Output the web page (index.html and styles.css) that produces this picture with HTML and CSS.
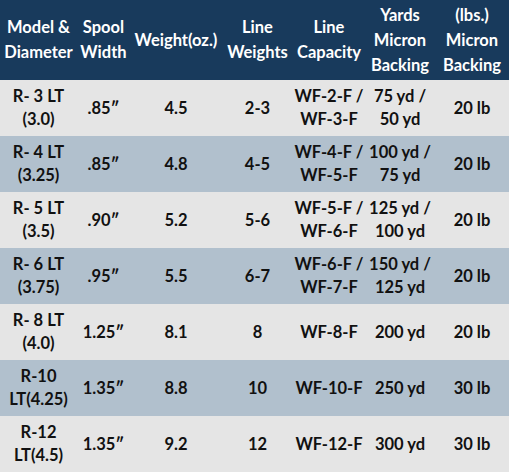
FILE: index.html
```html
<!DOCTYPE html>
<html>
<head>
<meta charset="utf-8">
<link rel="stylesheet" href="styles.css">
</head>
<body>
<table class="specs">
  <colgroup>
    <col class="c1"><col class="c2"><col class="c3"><col class="c4"><col class="c5"><col class="c6"><col class="c7">
  </colgroup>
  <thead>
    <tr>
      <th>Model &amp;<br>Diameter</th>
      <th>Spool<br>Width</th>
      <th>Weight(oz.)</th>
      <th>Line<br>Weights</th>
      <th>Line<br>Capacity</th>
      <th>Yards<br>Micron<br>Backing</th>
      <th>(lbs.)<br>Micron<br>Backing</th>
    </tr>
  </thead>
  <tbody>
    <tr><td>R- 3 LT<br>(3.0)</td><td>.85″</td><td>4.5</td><td>2-3</td><td>WF-2-F /<br>WF-3-F</td><td>75 yd /<br>50 yd</td><td>20 lb</td></tr>
    <tr><td>R- 4 LT<br>(3.25)</td><td>.85″</td><td>4.8</td><td>4-5</td><td>WF-4-F /<br>WF-5-F</td><td>100 yd /<br>75 yd</td><td>20 lb</td></tr>
    <tr><td>R- 5 LT<br>(3.5)</td><td>.90″</td><td>5.2</td><td>5-6</td><td>WF-5-F /<br>WF-6-F</td><td>125 yd /<br>100 yd</td><td>20 lb</td></tr>
    <tr><td>R- 6 LT<br>(3.75)</td><td>.95″</td><td>5.5</td><td>6-7</td><td>WF-6-F /<br>WF-7-F</td><td>150 yd /<br>125 yd</td><td>20 lb</td></tr>
    <tr><td>R- 8 LT<br>(4.0)</td><td>1.25″</td><td>8.1</td><td>8</td><td>WF-8-F</td><td>200 yd</td><td>20 lb</td></tr>
    <tr><td>R-10<br>LT(4.25)</td><td>1.35″</td><td>8.8</td><td>10</td><td>WF-10-F</td><td>250 yd</td><td>30 lb</td></tr>
    <tr><td>R-12<br>LT(4.5)</td><td>1.35″</td><td>9.2</td><td>12</td><td>WF-12-F</td><td>300 yd</td><td>30 lb</td></tr>
  </tbody>
</table>
</body>
</html>
```

FILE: styles.css
```css
html, body {
  margin: 0;
  padding: 0;
  background: #ffffff;
}

.specs {
  width: 509px;
  border-collapse: collapse;
  table-layout: fixed;
  font-family: Lato, "Open Sans", sans-serif;
  font-weight: 700;
  font-size: 16.5px;
  color: #111111;
}

.c1 { width: 77px; }
.c2 { width: 53px; }
.c3 { width: 92px; }
.c4 { width: 71px; }
.c5 { width: 72px; }
.c6 { width: 70px; }
.c7 { width: 74px; }

.specs th {
  background: #183a5c;
  color: #ffffff;
  height: 80px;
  padding: 0 1px;
  line-height: 25px;
  text-align: center;
  vertical-align: middle;
  font-weight: 700;
}

.specs td {
  height: 56px;
  padding: 0 1px;
  line-height: 23px;
  text-align: center;
  vertical-align: middle;
  box-sizing: border-box;
}

.specs tbody tr:nth-child(odd) td { background: #e5e5e5; }
.specs tbody tr:nth-child(even) td { background: #b1c0cd; }
```
